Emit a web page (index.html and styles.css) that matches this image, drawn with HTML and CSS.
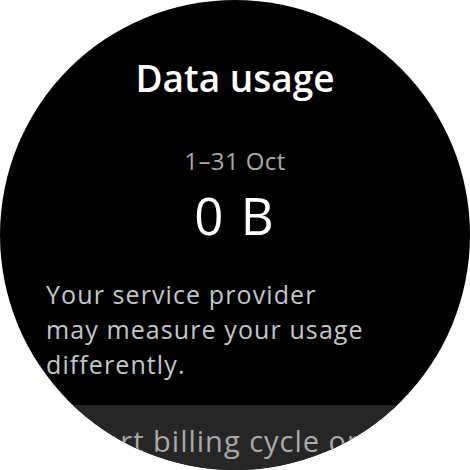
FILE: index.html
```html
<!DOCTYPE html>
<html>
<head>
<meta charset="utf-8">
<link rel="stylesheet" href="styles.css">
</head>
<body>
<div class="watch">
  <div class="content">
    <h1 class="title">Data usage</h1>
    <div class="period">1–31 Oct</div>
    <div class="amount">0 B</div>
    <p class="note">Your service provider<br>may measure your usage<br>differently.</p>
    <div class="chip"><span class="chip-label">Start billing cycle on</span></div>
  </div>
</div>
</body>
</html>
```
FILE: styles.css
```css
html, body {
  margin: 0;
  padding: 0;
  background: #ffffff;
}
.watch {
  width: 470px;
  height: 470px;
  border-radius: 50%;
  background: #000000;
  overflow: hidden;
  font-family: "Open Sans", Roboto, "Liberation Sans", sans-serif;
}
.content {
  display: flex;
  flex-direction: column;
  padding-top: 56px;
}
.title {
  margin: 0;
  font-size: 37px;
  line-height: 44px;
  font-weight: 600;
  color: #ffffff;
  text-align: center;
}
.period {
  margin-top: 47px;
  font-size: 24px;
  line-height: 28px;
  letter-spacing: 0.4px;
  color: #a9a9a9;
  text-align: center;
}
.amount {
  margin-top: 10px;
  font-size: 51px;
  line-height: 60px;
  letter-spacing: 2px;
  color: #ffffff;
  text-align: center;
}
.note {
  margin: 32px 0 0 0;
  padding: 0 40px 0 46px;
  font-size: 25px;
  line-height: 35px;
  letter-spacing: 1.1px;
  color: #c3c7cc;
  white-space: nowrap;
}
.chip {
  margin-top: 23px;
  background: #262626;
  padding: 19px 0 30px 75px;
}
.chip-label {
  font-size: 29px;
  line-height: 34px;
  letter-spacing: 1px;
  color: #a9a9a9;
  white-space: nowrap;
}
```
